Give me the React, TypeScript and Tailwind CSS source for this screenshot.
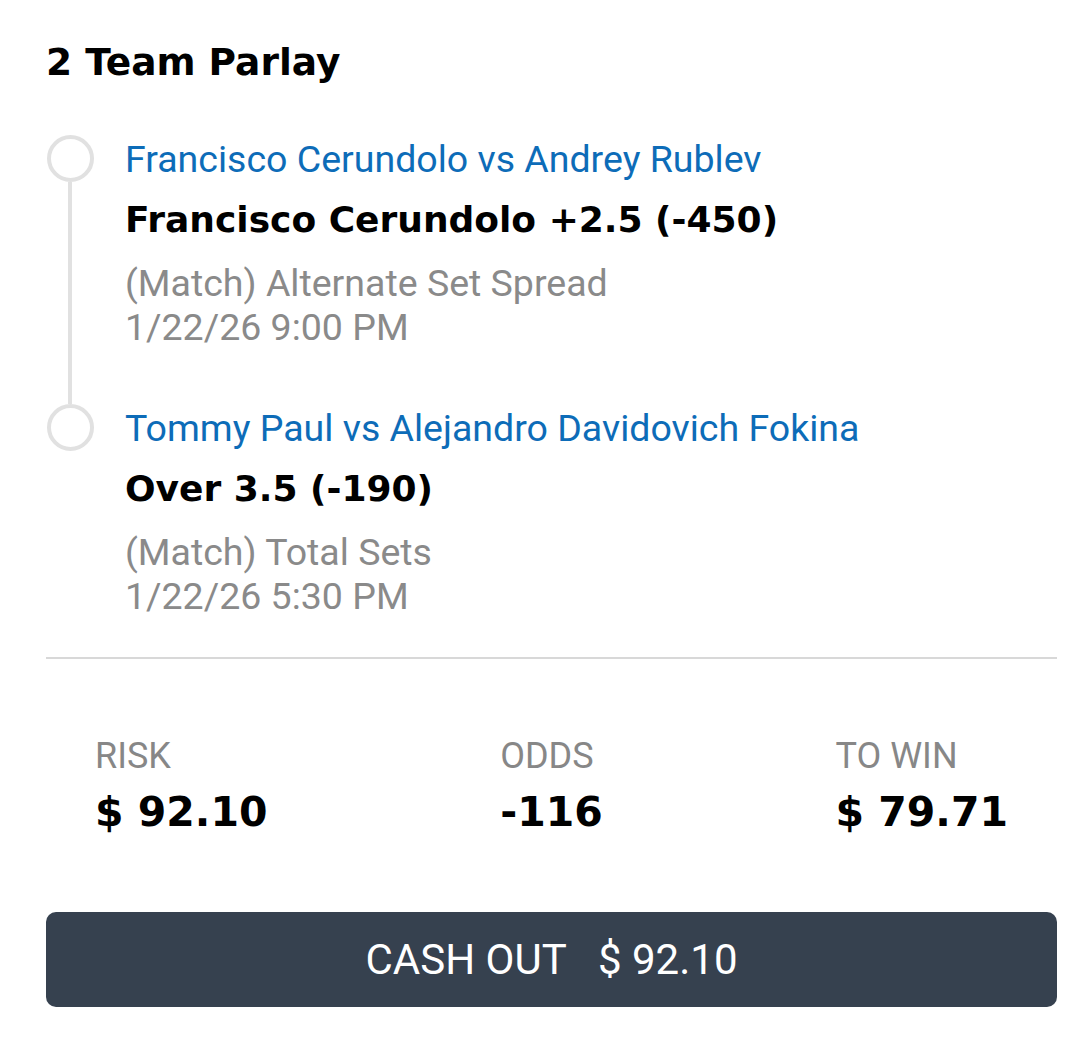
import React from 'react';

interface Leg {
  matchup: string;
  pick: string;
  market: string;
  time: string;
}

const legs: Leg[] = [
  {
    matchup: 'Francisco Cerundolo vs Andrey Rublev',
    pick: 'Francisco Cerundolo +2.5 (-450)',
    market: '(Match) Alternate Set Spread',
    time: '1/22/26 9:00 PM',
  },
  {
    matchup: 'Tommy Paul vs Alejandro Davidovich Fokina',
    pick: 'Over 3.5 (-190)',
    market: '(Match) Total Sets',
    time: '1/22/26 5:30 PM',
  },
];

const stats = [
  ['RISK', '$ 92.10'],
  ['ODDS', '-116'],
  ['TO WIN', '$ 79.71'],
];

const App: React.FC = () => {
  return (
    <div className="min-h-[1055px] w-[1085px] bg-white pl-[46px] pr-[28px] pt-[38px] font-['Roboto',sans-serif]">
      <h1 className="font-['DejaVu_Sans',sans-serif] text-[37.5px] font-bold leading-[48px] text-black">
        2 Team Parlay
      </h1>

      <div className="mt-[49px]">
        {legs.map((leg, index) => (
          <div key={leg.matchup} className="flex">
            {/* timeline */}
            <div className="flex w-[48px] flex-col items-center">
              <div className="h-[47px] w-[47px] shrink-0 rounded-full border-[4px] border-[#e1e1e1]" />
              {index < legs.length - 1 && <div className="w-[4px] flex-1 bg-[#e1e1e1]" />}
            </div>
            <div className={`ml-[31px] ${index < legs.length - 1 ? 'pb-[55px]' : 'pb-[39px]'}`}>
              <p className="text-[37.5px] leading-[48px] text-[#0d6cb8]">{leg.matchup}</p>
              <p className="mt-[12px] font-['DejaVu_Sans',sans-serif] text-[36px] font-bold leading-[50px] text-black">
                {leg.pick}
              </p>
              <p className="mt-[16px] text-[37.5px] leading-[44px] text-[#8a8a8a]">{leg.market}</p>
              <p className="text-[37.5px] leading-[44px] text-[#8a8a8a]">{leg.time}</p>
            </div>
          </div>
        ))}
      </div>

      <div className="h-[2px] bg-[#d8d8d8]" />

      <div className="mt-[77px] flex justify-between px-[49px]">
        {stats.map(([label, value]) => (
          <div key={label}>
            <p className="text-[36px] leading-[40px] text-[#878787]">{label}</p>
            <p className="mt-[8px] font-['DejaVu_Sans',sans-serif] text-[41px] font-bold leading-[56px] text-black">
              {value}
            </p>
          </div>
        ))}
      </div>

      <button className="mt-[72px] flex h-[95px] w-full items-center justify-center rounded-[10px] bg-[#36414f] text-[42px] text-white">
        CASH OUT&nbsp;&nbsp;&nbsp;$ 92.10
      </button>
    </div>
  );
};

export default App;
